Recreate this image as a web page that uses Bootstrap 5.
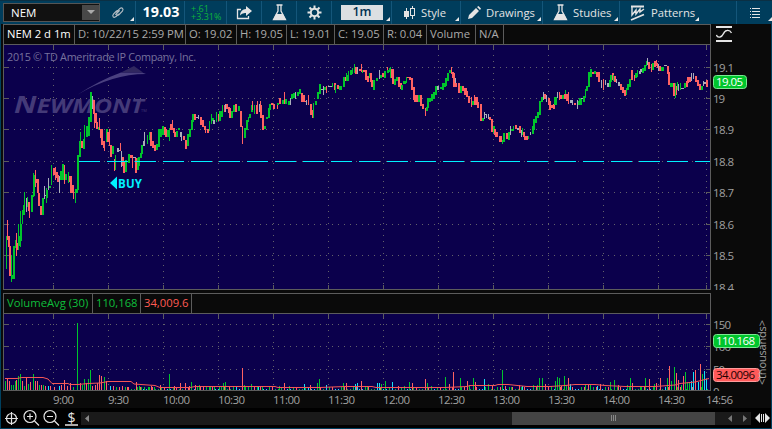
<!DOCTYPE html>
<html lang="en">
<head>
<meta charset="utf-8">
<title>NEM chart</title>
<link href="https://cdn.jsdelivr.net/npm/bootstrap@5.3.0/dist/css/bootstrap.min.css" rel="stylesheet">
<style>
body{width:772px;height:429px;overflow:hidden;background:#0a0a0a;font:11.25px/1 "Open Sans","Noto Sans",sans-serif;color:#aaa}
.app{width:772px;height:429px;border-left:1px solid #00405f;border-right:1px solid #00405f;border-bottom:1px solid #00405f}
.topbar{height:24px;background:#003d5c;color:#e4e4e4;border-top:1px solid #0b3044;margin:0 -1px}
.cell{flex:none;height:23px;border-right:1px solid #14567a;position:relative;white-space:nowrap}
.cell.last{border:0}
.menu::after{content:"";position:absolute;right:1px;bottom:3px;border-left:4px solid transparent;border-bottom:4px solid #e8e8e8}
.symbol{width:97px;height:19px;margin-left:3px;background:#111;border:1px solid #555;color:#fff;padding-left:7px;font-size:11.5px}
.drop{width:17px;height:15px;background:#484848}
.linkicon{margin-left:10px}
.price{font-size:14.300px;font-weight:700;color:#fff;padding-left:2px}
.delta{font-size:9px;line-height:8px;color:#0fb43c;padding-left:6px}
.period{width:42px;height:15px;margin-left:9px;background:#dcdfe2;color:#003050;font-size:12.500px;font-weight:600}
.w0{width:136px}.w1{width:49px}.w2{width:42px}.w3{width:35px}.w4{width:60px}.w5{width:69px}.w6{width:82px}.w7{width:77px}.w8{width:117px}.w9{width:36px}
.styleicon{margin:0 2px 0 11px}
.penicon{margin:0 5px 0 7px}
.flask{margin:0 5px 0 10px}
.wave{margin:0 6px 0 10px}
.patterns{width:80px}
.listicon{margin-left:13px}
.legendbar{margin-left:2px;height:20px;width:708px;border:1px solid #5c5c5c;border-bottom:0}
.legendbar>span{border-right:1px solid #5c5c5c;flex:none;padding-left:3px;line-height:18px;white-space:nowrap}
.a0{width:71px;color:#fff}.a1{width:111px}.a2{width:51px}.a3{width:50px}.a4{width:48px}.a5{width:49px}.a6{width:43px}.a7{width:49px}.a8{width:28px}
.b0{width:89px;color:#0fbe3c}.b1{width:48px;color:#0fbe3c}.b2{width:51px;color:#ff5b54}
.gap3{height:3px}
.sine{margin:2px 0 0 5px}
svg{display:block;flex:none}
.plot{margin-left:2px}
.plot text{font-family:"Open Sans","Noto Sans",sans-serif;font-size:11.5px;fill:#a0a0a0}
.footbar{height:20px;background:#000}
.scroller{width:670px;height:13px;background:#1a1a1a}
.thumb{width:203px;height:13px;background:#444;margin-right:12px}
</style>
<script src="https://cdn.jsdelivr.net/npm/bootstrap@5.3.0/dist/js/bootstrap.bundle.min.js"></script>
</head>
<body>
<div class="app d-flex flex-column">
  <div class="topbar d-flex">
    <div class="cell menu w0 d-flex align-items-center">
      <div class="symbol d-flex align-items-center justify-content-between pe-0">NEM<div class="drop d-flex align-items-center justify-content-center"><svg width="8" height="5"><path d="M0 0H8L4 4Z" fill="#aaa"/></svg></div></div>
      <svg class="linkicon" width="16" height="14" viewBox="0 0 18 16" fill="none" stroke="#b4bdc4" stroke-width="1.300"><path d="M7 7l4-4q2-1.500 3.200-.3T14 6l-4 4q-1.500 1.300-3 0M10 6q-1.500-1.300-3 0L4 9q-1.700 2-.5 3.300t3.300-.2l3-3M6 10l5-5"/></svg>
    </div>
    <div class="cell w1 d-flex align-items-center justify-content-center price">19.03</div>
    <div class="cell w2 d-flex flex-column justify-content-center delta"><span>+.61</span><span>+3.31%</span></div>
    <div class="cell w3 d-flex align-items-center justify-content-center"><svg width="17" height="14" viewBox="0 0 17 14"><path d="M5 3.500H1.500V12.500H12.500V10" fill="none" stroke="#e4e4e4" stroke-width="1.300"/><path d="M10 0L16 5L10 10V7Q6 6.500 4 9.500Q4.500 3.200 10 3Z" fill="#e4e4e4"/></svg></div>
    <div class="cell w3 d-flex align-items-center justify-content-center"><svg width="15" height="17" viewBox="0 0 15 17"><path d="M4.500 1H10.500M6 1V7L1.500 15.500H13.500L9 7V1" fill="none" stroke="#e4e4e4" stroke-width="1.300"/><path d="M4 10H11L14 16H1Z" fill="#e4e4e4"/></svg></div>
    <div class="cell w3 d-flex align-items-center justify-content-center"><svg width="15" height="15" viewBox="-7.500 -7.500 15 15" stroke="#e4e4e4"><circle r="3.700" fill="none" stroke-width="2"/><path d="M0-7V-4M0 4V7M-7 0H-4M4 0H7M-5-5L-3-3M3 3L5 5M-5 5L-3 3M3-3L5-5" stroke-width="2"/></svg></div>
    <div class="cell menu w4 d-flex align-items-center"><div class="period d-flex align-items-center justify-content-center">1m</div></div>
    <div class="cell menu w5 d-flex align-items-center"><svg class="styleicon" width="16" height="13" viewBox="0 0 16 13" shape-rendering="crispEdges" fill="#e4e4e4"><path d="M3 2h1v11H3zM1 5h5v6H1zM9 0h1v13h-1zM7 2h5v8H7z"/><path d="M8 3h3v6h-3z" fill="#003d5c"/></svg>Style</div>
    <div class="cell menu w6 d-flex align-items-center"><svg class="penicon" width="13" height="13" viewBox="0 0 13 13"><path d="M0 13L1 9L8 2L11 5L4 12ZM9 1L10.500 0L13 2.500L12 4Z" fill="#e4e4e4"/></svg>Drawings</div>
    <div class="cell menu w7 d-flex align-items-center"><svg class="flask" width="15" height="17" viewBox="0 0 15 17"><path d="M4.500 1H10.500M6 1V7L1.500 15.500H13.500L9 7V1" fill="none" stroke="#e4e4e4" stroke-width="1.300"/><path d="M4 10H11L14 16H1Z" fill="#e4e4e4"/></svg>Studies</div>
    <div class="cell w8 d-flex align-items-center"><div class="menu patterns position-relative d-flex align-items-center h-100"><svg class="wave" width="15" height="16" viewBox="0 0 15 16" fill="none" stroke="#e4e4e4"><path d="M1 1.500H14M1 15L14 9.500" stroke-width="1.800"/><path d="M2 2V10L6 5V9L10 4V7L14 4" stroke-width="1.400"/></svg>Patterns</div></div>
    <div class="cell menu last w9 d-flex align-items-center"><svg class="listicon" width="11" height="10" shape-rendering="crispEdges" fill="#e4e4e4"><path d="M0 0h1v1H0zM2 0h8v1H2zM0 3h1v1H0zM2 3h8v1H2zM0 6h1v1H0zM2 6h8v1H2zM0 9h1v1H0zM2 9h8v1H2z"/></svg></div>
  </div>

  <div class="d-flex">
    <div class="legendbar d-flex"><span class="a0">NEM 2 d 1m</span><span class="a1">D: 10/22/15 2:59 PM</span><span class="a2">O: 19.02</span><span class="a3">H: 19.05</span><span class="a4">L: 19.01</span><span class="a5">C: 19.05</span><span class="a6">R: 0.04</span><span class="a7">Volume</span><span class="a8">N/A</span></div>
    <svg class="sine" width="17" height="16" viewBox="0 0 17 16" fill="none" stroke="#e4e4e4"><path d="M0 1H16M0 15H16" stroke-width="2"/><path d="M0.500 9Q1 11.500 4 11C8 10.500 7 4.500 11 4.500Q14 4 15.500 7" stroke-width="1.300"/></svg>
  </div>
  <svg class="plot" id="priceplot" width="768" height="246" viewBox="3 44 768 246"></svg>
  <div class="gap3"></div>
  <div class="legendbar d-flex"><span class="b0">VolumeAvg (30)</span><span class="b1">110,168</span><span class="b2">34,009.6</span></div>
  <svg class="plot" id="volplot" width="768" height="95" viewBox="3 313 768 95"></svg>
  <div class="footbar d-flex align-items-center">
    <svg width="80" height="20" viewBox="1 408 80 20" fill="none" stroke="#e4e4e4" stroke-width="1.200"><circle cx="11.500" cy="418.500" r="5"/><path d="M11.500 412V425M5 418.500H18"/><circle cx="30" cy="416.500" r="6"/><path d="M34.500 421L39 425.500M27 416.500H33M30 413.500V419.500"/><circle cx="50" cy="416.500" r="6"/><path d="M54.500 421L59 425.500M47 416.500H53"/><path d="M65 425H78" stroke-width="1.500"/><text x="67.500" y="422.500" font-size="14" fill="#e4e4e4" stroke="none">$</text></svg>
    <div class="scroller d-flex align-items-center"><svg width="431" height="13"><path d="M8 3V10L4 6.500Z" fill="#888"/></svg><div class="thumb d-flex align-items-center justify-content-center"><svg width="6" height="6" shape-rendering="crispEdges"><path d="M0 0h1v6H0zM2 0h1v6H2zM4 0h1v6H4z" fill="#888"/></svg></div><svg width="20" height="13"><path d="M5 3V10L1 6.500ZM16 3V10L20 6.500Z" fill="#777"/></svg></div>
    <svg class="ms-1" width="15" height="10" viewBox="0 0 15 10" fill="#e4e4e4"><path d="M5 0V10L0 5ZM10 0V10L15 5ZM6 1H7V9H6ZM8 1H9V9H8Z"/></svg>
  </div>
</div>
<script>
// Candle runs: colour, x, width, top, bottom (in thirds of a pixel from each run's origin)
const runs = [
[0,160,`g18 3 228 326 r21 3 180 240 r24 6 228 261 r27 6 258 347 g33 3 285 365 g36 6 345 357 g39 6 258 356 g45 3 240 265 r48 3 219 288 r48 6 249 270 g54 3 192 270 g57 3 228 258 g60 3 153 261 g63 3 192 243 g66 4 150 193 g69 6 135 165 g72 3 96 156 w78 3 114 156 g81 3 111 140 r84 6 126 153 r87 3 126 174 g93 5 105 156 g99 3 39 111 g102 3 45 108 r105 3 30 80 r108 6 57 70 r111 6 57 99 r114 6 98 138 r120 5 138 165 g126 6 114 165 w132 3 78 117 w135 3 105 108 g138 3 84 129 g141 3 90 114 w145 3 54 90 g147 6 78 84 g153 3 15 75 r159 6 24 45 r165 3 21 60 r168 6 35 55 r171 6 45 66 w178 3 48 99 g181 6 33 60 g187 6 12 60 r192 3 15 72 g196 5 42 60 g204 3 36 70 r207 6 48 66 r210 6 48 98 r216 6 75 99 r219 3 78 117 g225 3 87 129 g228 6 87 99 g231 6 0 90`],
[0,40,`g232 7 345 375 g238 6 303 351 g240 3 276 351 r244 6 303 324 g249 6 297 327 g252 3 255 300 g258 6 258 290 g264 5 231 288 g270 5 156 246 g272 6 183 243 w276 3 168 208 r279 5 180 222 r282 3 196 265 r285 6 219 249 r288 6 245 268 g294 6 261 270 r297 3 234 270 r300 6 267 294 r303 6 267 315 r309 6 303 324 r312 3 303 333 g318 6 267 306 r321 6 276 306 r327 3 267 318 r330 6 315 350 g336 6 318 342 g345 4 345 390 r342 3 358 393 w351 5 325 337 w354 6 330 334 r360 3 309 333 w363 3 333 380 r366 6 350 378 r370 5 363 400 g376 6 360 395 g378 3 360 394 g384 6 342 370 r390 6 345 354 r396 3 345 383 w399 8 350 353 r407 5 355 400 g411 6 354 390 g414 6 350 378 g420 6 339 354 g424 6 315 342 w430 6 303 318 w434 3 276 310 g441 3 285 312 g447 5 276 300 r450 6 276 318 r456 6 303 325 r462 6 316 334 g468 5 311 330 g474 6 267 320 g480 6 267 290 g488 5 258 286 r492 6 261 286 r496 6 267 290 g501 6 270 292 g507 3 264 303 r510 6 252 270 r516 3 240 270 r519 6 264 280 r522 6 276 291 g528 5 273 292 g534 6 264 270 w540 5 276 291 w543 3 288 303 r549 6 288 300 r555 6 300 326 g561 6 282 318 g567 6 267 290 g573 6 240 270 g577 6 222 245 r582 6 222 241 w588 6 231 234 w594 3 225 236`],
[200,50,`r0 5 202 226 r6 6 210 231 r12 6 228 240 r15 3 228 249 r21 6 238 249 g27 4 213 243 g33 3 192 221 g36 5 205 213 w40 6 210 221 g48 4 186 215 r54 5 192 213 g57 5 184 213 g63 5 183 201 g66 3 165 189 r72 6 165 186 w75 3 162 186 r78 6 162 177 r84 6 171 190 r88 5 175 204 g93 6 183 204 g99 6 165 186 r105 6 162 185 g114 6 167 182 r120 6 183 231 r126 3 228 282 r128 4 228 270 g132 6 234 264 g138 5 210 240 g144 4 200 216 g148 5 192 203 g153 6 165 187 r158 3 153 180 g162 4 165 192 r168 6 165 192 r173 4 153 186 w177 3 162 186 r181 5 165 204 r180 3 153 180 r186 6 195 240 g192 6 228 238 g198 6 201 206 g204 6 174 204 g207 6 162 180 r213 7 160 165 r220 7 162 178 r231 3 159 177 g231 6 158 165 r237 6 144 162 r240 3 144 162 g246 6 150 162 r252 4 126 162 g256 6 147 162 g264 6 152 165 w270 3 144 164 g273 6 133 148 g279 6 130 145 w286 3 126 146 g291 6 126 138 g297 7 117 132 r303 6 130 155 r309 6 135 156 r315 6 153 156 w318 3 150 165 r324 3 135 165 r330 5 162 195 r336 4 180 204 g339 4 159 204 g345 6 153 165 g351 6 126 146 g357 5 102 132 w363 6 117 120 w369 3 108 135 g372 6 111 120 r378 4 108 128 w384 12 107 110 g396 3 99 111 r402 5 99 120 g405 3 105 129 r411 6 105 117 g417 9 108 120 g429 6 81 111 r435 6 81 93 g438 3 69 93 g441 7 75 93 g444 3 63 93 g450 6 60 74 g456 3 54 72 g462 3 42 70 r466 6 51 72 w471 3 51 72 r477 6 57 63 r483 4 42 66 g486 4 60 69 r490 8 60 66 r496 5 60 90 r501 6 78 96 g507 4 69 84 r510 6 69 96 r515 7 90 111 g521 6 90 120 g528 6 84 93 w537 3 60 86 g540 6 75 84 r546 6 69 82 g552 6 63 84 r561 3 51 66 g561 6 60 69 g567 5 54 66`],
[390,50,`g0 4 51 84 r3 4 57 84 r6 5 57 103 g12 6 87 104 g18 6 81 92 r24 6 80 110 r30 6 98 118 g33 5 105 120 g39 9 93 102 g48 3 82 100 r51 6 81 85 r57 5 81 90 r63 6 84 120 r69 6 111 150 r72 12 135 156 g84 6 135 156 r90 6 135 168 r96 6 162 177 r105 3 174 198 g108 6 171 184 g111 6 144 174 g117 6 144 156 g123 6 132 153 g130 6 126 147 g136 6 108 135 w143 5 108 120 g150 8 111 118 g156 6 99 120 g162 6 99 110 g165 6 84 108 g171 6 69 92 g177 6 60 69 r183 3 51 72 r186 5 66 84 r189 5 68 110 w195 3 84 105 r197 7 99 112 r204 6 99 128 g210 6 108 128 r216 6 108 122 r222 8 115 135 r229 6 123 140 r234 7 138 160 r243 3 141 172 g246 6 153 165 r252 3 135 165 r255 8 141 165 r261 6 155 175 r270 6 162 212 g276 6 204 212 w282 3 186 207 w285 6 192 195 w288 3 192 204 w294 3 192 206 r297 7 200 211 r303 6 207 247 g309 5 228 250 r312 6 237 256 r315 9 246 262 r327 8 258 276 g336 3 270 282 g340 5 249 275 r348 6 249 268 g354 6 246 270 w360 3 228 255 g363 6 237 243 g369 4 228 242 r375 6 226 238 w381 5 234 241 r387 6 228 250 w393 3 240 260 g396 3 235 256 r399 6 246 262 r402 12 258 270 g414 4 258 266 w420 4 246 255 g426 5 228 252 g429 6 207 240 g435 6 198 220 g441 6 186 204 g447 6 153 195 g453 6 142 156 w459 3 126 150 r462 6 132 148 w468 3 135 156 r474 6 144 164 r477 6 153 180 r483 6 165 175 r489 6 162 176 g492 6 141 165 g498 3 141 165 w501 3 126 144 r507 3 126 150 r510 6 135 147 g516 6 135 147 g525 3 120 141 r522 8 132 147 r530 7 132 153 r534 3 126 162 w540 5 150 158 w546 3 150 165 r552 5 159 164 w561 3 150 177 g564 6 153 165 g567 3 144 162`],
[580,40,`g0 5 174 194 w5 5 174 177 g9 6 168 186 g15 4 147 174 g19 6 138 153 g24 6 96 141 g30 6 87 110 r36 6 96 102 g42 6 94 101 r48 6 97 110 r54 6 96 126 w63 3 120 144 r70 3 117 150 w75 3 120 134 w81 6 129 140 g87 6 120 140 g90 6 105 126 r96 6 98 120 g99 3 105 123 r102 6 108 126 w110 3 117 130 w114 6 126 138 r120 6 132 150 r126 6 141 160 r132 6 150 168 g138 4 144 165 g141 6 132 150 g147 6 117 142 r153 6 90 120 r162 3 105 123 g165 7 99 114 g171 3 90 111 w177 5 93 102 w180 6 87 96 g186 6 84 98 g192 6 75 92 g198 3 63 78 w201 3 54 75 r205 6 66 88 r213 3 72 96 g216 6 70 90 r222 6 63 80 r228 3 60 78 r231 4 69 84 w234 4 72 93 r237 6 78 92 g243 9 80 93 w252 9 75 79 r261 6 78 102 r264 6 96 135 g270 8 128 140 r279 6 130 168 g285 3 129 174 r288 4 138 165 g291 3 126 150 w294 3 132 153 g300 3 129 150 w303 8 144 148 g312 6 129 145 r318 6 123 140 r321 6 111 130 r327 6 110 126 w333 3 99 123 w339 3 99 117 r345 6 108 126 r351 6 120 138 r357 6 132 150 g363 6 138 150 w369 3 123 138 w373 5 127 132 r378 6 120 140`]];
const hues = {g:'#00c52c', r:'#ff6262', w:'#aaaebb', c:'#16e2f4'};
const xs = [53,108,163,218,273,328,383,438,493,548,603,658,706];
const rect = (x,y,w,h,f) => `<rect x="${x}" y="${y}" width="${w}" height="${h}" fill="${f}" shape-rendering="crispEdges"/>`;
function grid(top,bottom,ys,tickBottom){
  let s = rect(3,top,708,bottom-top+1,'#0b004c');
  ys.forEach(y => { for(let x=8;x<706;x+=6) s += rect(x,y,1,1,'#63616b'); s += rect(4,y,5,1,'#5c5c5c')+rect(706,y,4,1,'#5c5c5c'); });
  xs.forEach(x => { for(let y=top+5;y<bottom-4;y+=6) s += rect(x,y,1,1,'#63616b'); s += rect(x,top,1,5,'#5c5c5c'); if(tickBottom) s += rect(x,bottom-4,1,4,'#5c5c5c'); });
  return s + rect(3,top,708,1,'#5c5c5c')+rect(3,bottom,708,1,'#5c5c5c')+rect(3,top,1,bottom-top,'#5c5c5c')+rect(710,top,1,bottom-top,'#5c5c5c');
}
function tag(x,y,w,f,e,t,c,tw){
  return `<rect x="${x+.5}" y="${y+.5}" width="${w}" height="13" rx="3" fill="${f}" stroke="${e}"/><text x="${x+3}" y="${y+11}" style="fill:${c}" textLength="${tw}">${t}</text>`;
}
let p = grid(44,289,[67,98,129,161,192,224,255],true);
p += `<g fill="#4a4080"><path d="M77 95Q100 80 121 72.500H142L146 74Q112 74 77 95Z"/><path d="M121 72.500L134 66L143 72.500Z" fill="#302760"/><text x="14" y="113" textLength="130" lengthAdjust="spacingAndGlyphs" style="fill:#443a78;font-weight:700;font-style:italic;font-size:24px">N<tspan style="font-size:20px">EWMONT</tspan></text><text x="141" y="112" style="font-size:4px;fill:#443a78">TM</text></g>`;
p += `<text x="7" y="61" textLength="189" style="font-size:10.800px;fill:#77729d">2015 © TD Ameritrade IP Company, Inc.</text>`;
runs.forEach(([ox,oy,list]) => {
  for(const m of list.matchAll(/([grw])(\d+) (\d+) (\d+) (\d+)/g)){
    const x=ox+Math.floor(+m[2]/3), y=oy+Math.round(m[4]/3);
    p += rect(x,y,Math.max(1,Math.round(m[3]/3)),Math.max(1,oy+Math.round(m[5]/3)-y),hues[m[1]]);
  }
});
for(let x=79;x<710;x+=28) p += rect(x,161,Math.min(21,710-x),1,'#00f2ff');
p += `<path d="M110 183L117 176.500V189.500Z" fill="#00f2ff"/><text x="118" y="187.500" textLength="24" style="fill:#00f2ff;font-weight:700;font-size:11.500px">BUY</text>`;
[['19.1',67],['19',98],['18.9',129],['18.8',161],['18.7',192],['18.6',224],['18.5',255],['18.4',287]].forEach(a => p += `<text x="713" y="${a[1]+5}" textLength="${a[0].length>2?21:12}">${a[0]}</text>`);
p += tag(713,75,33,'#00c52c','#7be892','19.05','#fff',27);
priceplot.innerHTML = p;

// Volume bars: colour, x, height
const vol = `g5 9 r7 12 r9 9 g11 5 g13 5 g15 9 r16 10 g18 14 g20 16 r22 9 g24 4 r26 12 g28 6 r30 8 g33 16 r35 9 r37 9 g39 5 r41 5 g43 5 r45 4 c48 4 r50 4 r54 3 c59 4 r61 5 r64 10 r67 4 r70 7 g73 3 g77 67 r80 7 g82 5 g84 11 r86 7 g88 11 g90 20 r92 4 r95 5 r97 7 r99 15 r101 14 g104 13 r106 9 c110 4 r113 4 g116 3 r119 3 r122 4 r127 3 r136 8 g139 4 g141 3 g144 3 g148 3 r151 4 g154 3 r160 5 r164 3 g169 16 r174 4 r180 7 r185 7 r189 4 g191 8 r195 5 g199 5 r203 3 g206 4 g210 4 g214 4 g219 4 g223 7 g225 8 r229 4 g233 3 c236 3 r242 22 g244 5 g248 3 g251 6 r254 4 c258 4 g262 3 g279 4 r284 7 g289 4 c304 6 c308 3 r310 5 g317 7 g319 11 c326 5 g343 7 r346 7 c355 6 c357 7 r361 9 g367 4 c377 7 c379 7 g381 6 g385 9 c392 8 r398 4 g404 4 g409 8 r412 7 r425 11 g427 7 g431 4 g445 13 r449 6 r453 18 g460 12 r467 9 g469 5 g473 12 r475 8 c484 11 g488 6 r492 4 g502 20 r505 4 g511 3 r519 5 c522 4 g533 5 g537 5 g539 12 g542 12 r545 6 g551 4 g555 9 g557 13 g559 12 r561 4 g564 14 g566 5 r568 12 c570 6 g585 5 r588 6 g590 5 c597 4 r600 6 g610 8 g614 10 r618 5 g627 5 g630 12 r632 7 g640 4 g645 12 r649 11 g654 6 r656 7 r660 12 c665 3 g667 12 r669 24 g671 9 g674 23 r676 17 r678 10 g681 5 r683 14 g685 18 g687 8 g689 8 c691 9 c693 18 r695 20 c698 8 r700 26 g702 16 c704 19 c706 11`;
let v = grid(313,390,[324,346,369],false);
for(let i=0;i<200;i++){
  const x = 110+i*3, h = 1+(i*7+i*i*3)%4;
  v += rect(x,390-h,1,h,hues['grgcrg'[(i*5+(i>>2))%6]]);
}
for(const m of vol.matchAll(/([grc])(\d+) (\d+)/g)) v += rect(+m[2],390-m[3],1,+m[3],hues[m[1]]);
v += `<polyline fill="none" stroke="#f55656" points="5,378.500 17,378.500 22,377.500 43,377.500 48,379 52,383.500 68,383.500 70,384.500 78,384.500 88,383.500 100,383 108,381.500 131,381.500 134,384 155,385.500 160,387.500 190,387.500 195,386.500 240,386.500 275,386.500 278,387.500 320,387.500 345,386.500 372,386.500 376,387.500 400,387.500 445,387.500 467,386.500 470,385.500 495,385.500 498,384.500 508,384.500 527,386.500 550,386.500 565,385.500 575,384.500 595,384.500 605,385.500 625,386.500 655,386.500 675,385 680,383.500 695,382 703,380 709,378.500"/>`;
[['150',324,18],['100',346,18],['50',369,12],['0',391,6]].forEach(a => v += `<text x="713" y="${a[1]+5}" textLength="${a[2]}">${a[0]}</text>`);
v += rect(711,391,60,17,'#0a0a0a');
['9:00','9:30','10:00','10:30','11:00','11:30','12:00','12:30','13:00','13:30','14:00','14:30','14:56'].forEach((t,i) => v += `<text x="${xs[i]}" y="404" textLength="${i<2?21:27}">${t}</text>`);
v += tag(713,334,46,'#00c52c','#7be892','110.168','#fff',39)+tag(713,368,46,'#ff5a5a','#ff9b9b','34.0096','#200',39);
v += `<text transform="translate(766 385) rotate(-90)" textLength="65" style="font-size:11px">&lt;thousands&gt;</text>`;
volplot.innerHTML = v;
</script>
</body>
</html>
